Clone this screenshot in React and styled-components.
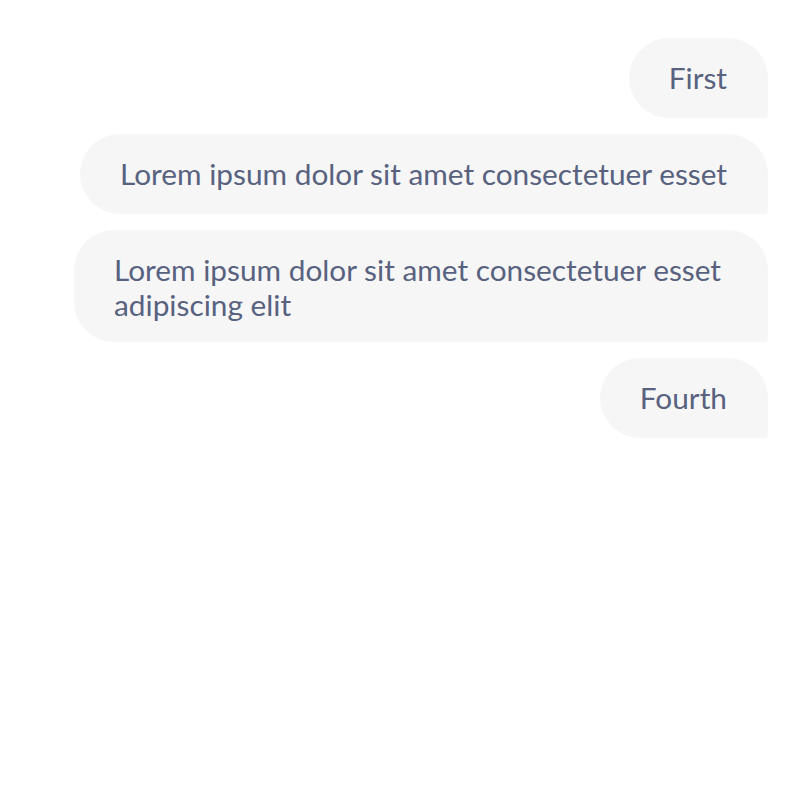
import React from "react";
import styled, { createGlobalStyle } from "styled-components";

const Global = createGlobalStyle`
  html, body { margin: 0; padding: 0; background: #ffffff; }
  body { font-family: Lato, "Open Sans", sans-serif; }
`;

const Thread = styled.div`
  display: flex;
  flex-direction: column;
  align-items: flex-end;
  gap: 16px;
  padding: 38px 32px 0 32px;
`;

const Bubble = styled.div`
  box-sizing: border-box;
  max-width: 694px;
  min-height: 80px;
  padding: 22px 41px 20px 40px;
  background: #f6f6f7;
  color: #58627f;
  font-size: 29.8px;
  line-height: 35px;
  border-radius: 40px 40px 4px 40px;
`;

const messages = [
  "First",
  "Lorem ipsum dolor sit amet consectetuer esset",
  "Lorem ipsum dolor sit amet consectetuer esset adipiscing elit",
  "Fourth",
];

export default function App() {
  return (
    <>
      <Global />
      <Thread>
        {messages.map((m, i) => (
          <Bubble key={i}>{m}</Bubble>
        ))}
      </Thread>
    </>
  );
}
